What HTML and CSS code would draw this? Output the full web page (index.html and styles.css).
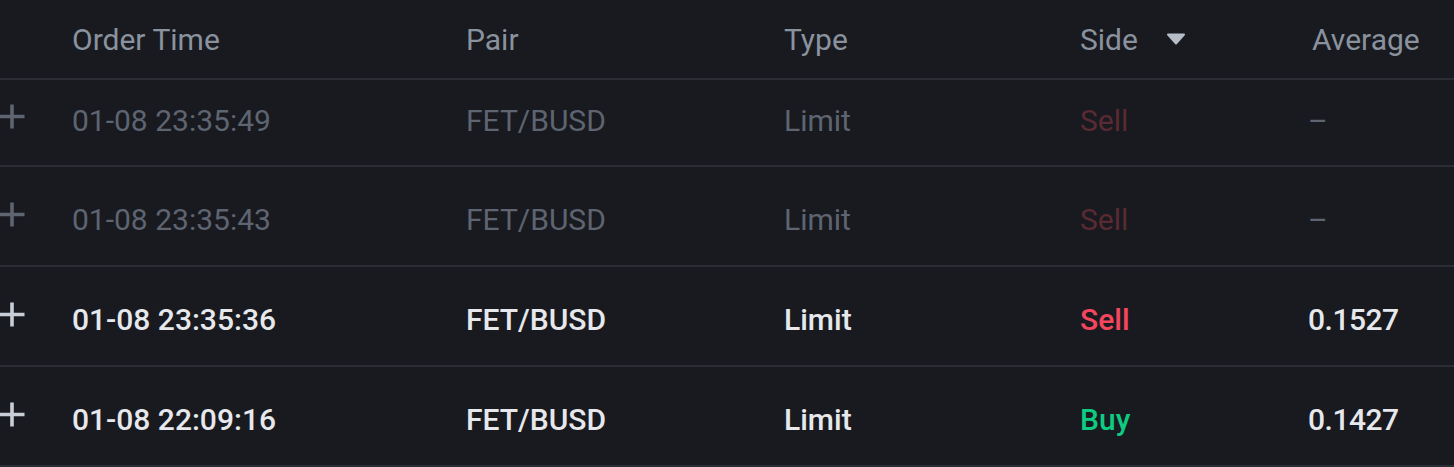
FILE: index.html
```html
<!DOCTYPE html>
<html lang="en">
<head>
<meta charset="utf-8">
<title>Orders</title>
<link rel="stylesheet" href="styles.css">
</head>
<body>
<div class="table">
  <div class="row head">
    <div class="cell"></div>
    <div class="cell">Order Time</div>
    <div class="cell">Pair</div>
    <div class="cell">Type</div>
    <div class="cell side-head">Side <svg class="sort" width="20" height="12" viewBox="0 0 20 12"><path d="M2 1.5 H18 L10 10.5 Z" fill="#b7bdc6" stroke="#b7bdc6" stroke-width="2" stroke-linejoin="round"/></svg></div>
    <div class="cell avg">Average</div>
  </div>
  <div class="row dim first">
    <div class="cell plus"><svg width="26" height="26" viewBox="0 0 26 26"><path d="M0 12.5 H24.5 M12 0.5 V24.5" stroke="currentColor" stroke-width="3.6"/></svg></div>
    <div class="cell">01-08 23:35:49</div>
    <div class="cell">FET/BUSD</div>
    <div class="cell">Limit</div>
    <div class="cell sell">Sell</div>
    <div class="cell avg">–</div>
  </div>
  <div class="row dim">
    <div class="cell plus"><svg width="26" height="26" viewBox="0 0 26 26"><path d="M0 12.5 H24.5 M12 0.5 V24.5" stroke="currentColor" stroke-width="3.6"/></svg></div>
    <div class="cell">01-08 23:35:43</div>
    <div class="cell">FET/BUSD</div>
    <div class="cell">Limit</div>
    <div class="cell sell">Sell</div>
    <div class="cell avg">–</div>
  </div>
  <div class="row active">
    <div class="cell plus"><svg width="26" height="26" viewBox="0 0 26 26"><path d="M0 12.5 H24.5 M12 0.5 V24.5" stroke="currentColor" stroke-width="3.6"/></svg></div>
    <div class="cell">01-08 23:35:36</div>
    <div class="cell">FET/BUSD</div>
    <div class="cell">Limit</div>
    <div class="cell sell">Sell</div>
    <div class="cell avg">0.1527</div>
  </div>
  <div class="row active">
    <div class="cell plus"><svg width="26" height="26" viewBox="0 0 26 26"><path d="M0 12.5 H24.5 M12 0.5 V24.5" stroke="currentColor" stroke-width="3.6"/></svg></div>
    <div class="cell">01-08 22:09:16</div>
    <div class="cell">FET/BUSD</div>
    <div class="cell">Limit</div>
    <div class="cell buy">Buy</div>
    <div class="cell avg">0.1427</div>
  </div>
</div>
</body>
</html>
```

FILE: styles.css
```css
html, body {
  margin: 0;
  padding: 0;
  background: #181a20;
}
body {
  font-family: Roboto, "Liberation Sans", sans-serif;
  font-size: 30px;
  width: 1454px;
  height: 467px;
  overflow: hidden;
}
.table {
  display: flex;
  flex-direction: column;
}
.row {
  display: grid;
  grid-template-columns: 72px 394px 318px 296px 228px 1fr;
  align-items: center;
  box-sizing: border-box;
  height: 100px;
  padding-top: 6px;
  border-bottom: 2px solid #2a2d34;
  white-space: nowrap;
}
.row.head {
  height: 80px;
  padding-top: 0;
  color: #8a929e;
}
.row.first {
  height: 87px;
  padding-top: 0;
  padding-bottom: 4px;
}
.row.dim {
  color: #5e6470;
}
.row.dim .sell {
  color: #5a2a32;
}
.row.active {
  color: #e6e8ec;
  font-weight: 500;
}
.row.active .plus {
  color: #c9ced6;
}
.sell {
  color: #f6465d;
}
.buy {
  color: #0ecb81;
}
.cell {
  display: flex;
  align-items: center;
}
.plus {
  color: #5e6470;
  padding-bottom: 8px;
}
.plus svg {
  display: block;
}
.side-head {
  gap: 28px;
}
.sort {
  display: block;
}
.avg {
  letter-spacing: -0.5px;
}
.head .avg {
  padding-left: 4px;
  letter-spacing: 0;
}
```
